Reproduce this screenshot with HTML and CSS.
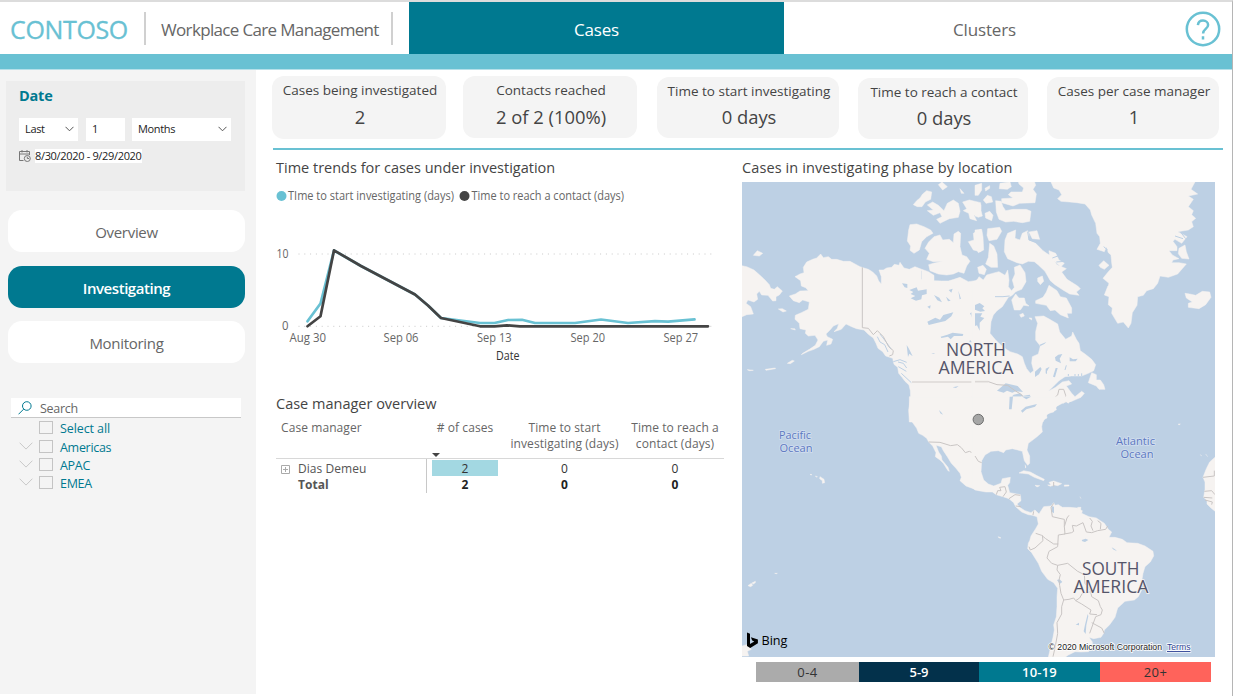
FILE: index.html
```html
<!DOCTYPE html>
<html lang="en">
<head>
<meta charset="utf-8">
<title>Workplace Care Management</title>
<link rel="stylesheet" href="styles.css">
</head>
<body>
<div class="app">
  <header class="header">
    <div class="brand">CONTOSO</div>
    <div class="divider"></div>
    <div class="product">Workplace Care Management</div>
    <div class="divider divider-end"></div>
    <div class="tab tab-active">Cases</div>
    <div class="tab tab-clusters">Clusters</div>
    <svg class="help" viewBox="0 0 36 36"><circle cx="18" cy="18" r="16.2"/><path d="M12.9 14.2C13.2 11.2 15.2 9.6 18 9.6c3 0 5.1 1.8 5.1 4.4 0 3.8-5 4.1-5 8.400M18 25.200v3.400"/></svg>
  </header>
  <div class="band"></div>
  <div class="body">
    <aside class="sidebar">
      <section class="date-panel">
        <h2 class="date-title">Date</h2>
        <div class="date-inputs">
          <div class="field field-last">Last<svg class="chev" viewBox="0 0 9 6"><path d="M.5 .8l4 4 4-4"/></svg></div>
          <div class="field field-num">1</div>
          <div class="field field-unit">Months<svg class="chev" viewBox="0 0 9 6"><path d="M.5 .8l4 4 4-4"/></svg></div>
        </div>
        <div class="date-range">
          <svg class="cal" viewBox="0 0 12 12"><path d="M4.5 10.5h-4v-9h10v3.5M.5 4h10M3 0v2.500M8 0v2.500"/><circle cx="8.300" cy="8.500" r="3"/><path d="M8.300 6.700v1.800h1.800"/></svg>
          <span class="range-text">8/30/2020 - 9/29/2020</span>
        </div>
      </section>
      <nav class="nav">
        <div class="nav-item">Overview</div>
        <div class="nav-item nav-active">Investigating</div>
        <div class="nav-item">Monitoring</div>
      </nav>
      <section class="slicer">
        <div class="search"><svg class="mag" viewBox="0 0 14 14"><circle cx="8.800" cy="5" r="4.300"/><path d="M5.700 8.100L.5 13.300"/></svg>Search</div>
        <div class="opt opt-all"><span class="arrow"></span><span class="box"></span>Select all</div>
        <div class="opt"><svg class="arrow" viewBox="0 0 14 8"><path d="M.6 .7l6.400 6.400L13.400 .7"/></svg><span class="box"></span>Americas</div>
        <div class="opt"><svg class="arrow" viewBox="0 0 14 8"><path d="M.6 .7l6.400 6.400L13.400 .7"/></svg><span class="box"></span>APAC</div>
        <div class="opt"><svg class="arrow" viewBox="0 0 14 8"><path d="M.6 .7l6.400 6.400L13.400 .7"/></svg><span class="box"></span>EMEA</div>
      </section>
    </aside>
    <main class="main">
      <div class="cards">
        <div class="card card-a"><div class="card-label">Cases being investigated</div><div class="card-value">2</div></div>
        <div class="card card-b"><div class="card-label">Contacts reached</div><div class="card-value">2 of 2 (100%)</div></div>
        <div class="card card-c"><div class="card-label">Time to start investigating</div><div class="card-value">0 days</div></div>
        <div class="card card-d"><div class="card-label">Time to reach a contact</div><div class="card-value">0 days</div></div>
        <div class="card card-e"><div class="card-label">Cases per case manager</div><div class="card-value">1</div></div>
      </div>
      <div class="rule"></div>
      <div class="columns">
        <div class="left">
          <h3 class="title">Time trends for cases under investigation</h3>
          <svg class="chart" viewBox="276 186 446 180">
            <circle cx="281.500" cy="196" r="5" fill="#69c1d3"/>
            <text x="288" y="200" textLength="166" lengthAdjust="spacingAndGlyphs">TIme to start investigating (days)</text>
            <circle cx="464.500" cy="196" r="5" fill="#444"/>
            <text x="471.500" y="200" textLength="152.500" lengthAdjust="spacingAndGlyphs">Time to reach a contact (days)</text>
            <path class="grid" d="M298.500 254H716M298.500 326.300H716"/>
            <text x="276.500" y="258" textLength="12" lengthAdjust="spacingAndGlyphs">10</text>
            <text x="282" y="330" textLength="6.500" lengthAdjust="spacingAndGlyphs">0</text>
            <polyline class="series" stroke="#69c1d3" points="307.500,321.300 320.500,303.500 334,250.500 361,266 415,294.500 428,305.500 441,318 480,323 494.500,323 508,320 522,319.800 535,323 575,323 601,319.500 628,323 655,321.200 668,321.700 694.500,319.300"/>
            <polyline class="series" stroke="#444" points="307.500,326.300 320.500,316.300 334,250.300 361,266 415,294.500 428,305.500 441,318 480,326.300 494.500,326.300 507,325.400 520,326.300 708,326.300"/>
            <text x="289.500" y="342" textLength="36.500" lengthAdjust="spacingAndGlyphs">Aug 30</text>
            <text x="383.500" y="342" textLength="35" lengthAdjust="spacingAndGlyphs">Sep 06</text>
            <text x="477" y="342" textLength="34.500" lengthAdjust="spacingAndGlyphs">Sep 13</text>
            <text x="570.500" y="342" textLength="34.500" lengthAdjust="spacingAndGlyphs">Sep 20</text>
            <text x="663.500" y="342" textLength="34.500" lengthAdjust="spacingAndGlyphs">Sep 27</text>
            <text class="axis-title" x="496" y="360" textLength="23.500" lengthAdjust="spacingAndGlyphs">Date</text>
          </svg>
          <h3 class="title title-table">Case manager overview</h3>
          <div class="table">
            <div class="row head">
              <div class="c1">Case manager</div>
              <div class="c2"># of cases<span class="sort"></span></div>
              <div class="c3">Time to start<br>investigating (days)</div>
              <div class="c4">Time to reach a<br>contact (days)</div>
            </div>
            <div class="row first">
              <div class="c1 name"><svg class="plus" viewBox="0 0 9 9"><path d="M.5 .5h8v8h-8zM2 4.500h5M4.500 2v5"/></svg>Dias Demeu</div>
              <div class="c2"><span class="hl">2</span></div>
              <div class="c3">0</div>
              <div class="c4">0</div>
            </div>
            <div class="row total">
              <div class="c1 name">Total</div>
              <div class="c2">2</div>
              <div class="c3">0</div>
              <div class="c4">0</div>
            </div>
          </div>
        </div>
        <div class="right">
          <h3 class="title title-map">Cases in investigating phase by location</h3>
          <svg class="map" viewBox="0 0 473 475">
            <rect width="473" height="475" fill="#bdd0e4"/>
            <!-- Alaska, western Canada, Siberia -->
            <g transform="translate(-2 -2) scale(.33333)">
              <path class="land" d="M0 256L20 260 42 270 60 286 75 300 88 314 92 325 103 328 112 320 127 333 118 345 108 350 108 362 98 363 84 346 65 345 58 334 50 342 53 358 42 366 24 360 18 370 32 380 40 402 20 404 0 413zM40 226L52 212 68 220 58 228z"/>
              <path class="land" d="M165 290L180 282 192 278 190 262 200 246 218 238 230 234 242 222 250 233 265 230 275 238 290 238 310 244 330 244 345 252 360 260 372 264 385 268 398 276 410 288 416 303 424 312 424 290 417 270 430 270 440 264 455 262 463 253 477 256 480 247 492 264 508 268 525 260 545 268 565 275 582 286 582 302 605 303 625 303 642 298 660 292 685 305 705 302 722 295 722 726 508 726 506 690 512 655 511 632 507 615 495 604 486 592 476 580 473 562 462 553 458 535 437 528 428 515 414 505 408 490 400 474 385 463 372 450 350 446 335 440 318 432 304 448 282 455 292 445 296 431 280 438 270 450 258 462 262 470 278 478 273 492 260 496 263 480 250 484 238 500 222 508 205 514 184 524 188 520 208 508 226 496 234 480 225 466 205 468 196 460 198 450 180 446 178 430 165 418 166 406 184 398 205 388 208 366 188 360 178 368 160 362 148 348 166 342 180 333 205 332 197 323 184 318 182 302z"/>
              <path class="land" d="M115 387l12-1 12 7-10 3zM152 446l12 0 2 4zM142 550l15-9 6 2-12 8zM76 568l30-4 0 2-28 5zM22 569l18 2-12 1z"/>
              <path class="land" d="M502 183L506 150 510 134 530 132 552 140 572 150 579 160 560 170 545 185 538 210 522 220 510 211 512 198zM520 74L530 62 540 54 548 42 560 32 575 36 572 58 556 66 546 80 532 80zM562 75L578 66 595 76 612 92 622 70 640 60 655 70 660 94 655 112 628 116 600 130 590 118 606 110 600 98 580 106 562 92 580 90zM595 14L606 6 622 20 608 30zM660 26l12 14-8 0zM668 66l20-6 34 8 0 30-20 8 8 16-20-6-4-16-16-8 10-6z"/>
              <path class="land" d="M555 205L566 186 582 170 600 165 608 180 628 178 640 188 642 162 655 154 662 160 660 200 666 225 680 230 690 244 680 258 672 280 655 275 640 282 620 285 595 282 570 272 566 254 580 250 608 244 580 245 560 238 568 220zM685 185L702 180 700 160 722 148V215L700 210z"/>
              <path class="water" d="M486 310l16 2 0 12-8-2zM508 330l22-8 4 10 26-4 0 14-14 4-2 12-16 4-16-7 14-7-14-6 8-6zM562 425l24-12 14 6 10-14 30-8-6 12-18 14-26 6-24 6zM582 345l16 8 8 14-14-6zM562 380l10-4-2 10zM626 330l12-4-4 12zM602 470l20-6 16-6 32 4-2 6-26 0-10 10-8-8-20 4zM574 519l12 0-6 2zM638 622l18-4-8 6zM598 690l8 8 4 12-10-10zM500 495l6 10 12 24-10-8-4 10zM700 365l20-6v8l-16 8zM690 400l18-10 14 5-8 10-18 8 22 2-12 18 14-2-22 10 2-20zM655 332l8 24-4 2zM618 350l14 12-8 2zM690 480l10 8-12-2zM545 272v26h1v-26z"/>
              <path class="coast" d="M412 470l8 16 14 8 10 22M420 462l20 26 14 20M460 545l20-6 20 8M475 560l24 14M484 580l30 28M474 546l16 4 10 14"/>
              <path class="border" d="M367 262V443L385 445 400 464 412 452 430 470 446 500 460 512 458 524 448 528"/>
              <path class="border border-strong" d="M516 606H722"/>
            </g>
            <!-- Arctic archipelago, eastern Canada, Greenland, Iceland -->
            <g transform="translate(233 -2) scale(.33333)">
              <path class="land" d="M0 312L12 290 25 300 35 285 60 278 72 275 90 286 98 270 102 300 100 320 110 332 118 322 112 300 120 282 118 262 135 255 150 278 153 305 140 328 122 335 112 346 100 352 82 380 66 392 55 405 48 425 45 460 60 478 72 490 85 502 105 515 128 522 142 530 148 550 155 566 166 580 176 572 170 550 172 530 190 522 196 498 182 480 182 455 188 430 180 410 206 408 224 418 248 432 254 456 272 478 290 468 293 456 304 478 312 490 316 512 330 522 350 538 362 554 356 572 340 580 320 588 290 588 270 590 252 602 240 614 220 634 242 622 262 606 282 602 290 612 274 618 290 640 300 650 320 634 328 640 318 652 290 664 270 666 258 672 242 680 244 690 228 695 214 706 204 726H-10V312z"/>
              <path class="land" d="M340 608L350 578 364 584 364 600 376 600 386 614 390 628 372 628 364 618zM276 660l20-6-4 8-16 6z"/>
              <path class="land" d="M228 6L236 24 252 30 260 44 248 56 258 64 284 66 306 68 330 72 346 90 350 105 362 130 366 160 374 170 376 190 366 208 388 215 394 200 400 218 408 225 410 248 412 262 400 275 384 295 402 310 396 325 388 345 402 350 400 374 412 384 410 400 428 430 445 426 460 444 468 430 472 398 486 376 488 350 505 346 515 332 535 326 548 310 555 288 580 292 608 282 634 252 612 248 590 248 594 240 612 236 592 225 582 212 606 212 606 200 594 184 600 178 620 190 636 170 608 155 640 150 655 140 650 125 662 115 650 104 655 92 640 80 655 58 640 48 668 42 648 28 660 6z"/>
              <path class="land" d="M612 205l18-10 4 20 8 22-22-2-10-14zM372 256l14-14 16 14-14 12-12-6zM630 340l14 2 18 4 20-12 22 2 4 16-16 22-20 12-32-4 0-12 12-4-18-12z"/>
              <path class="land" d="M0 16l20-6 0 20-10 16-10 0zM30 25l14-8 0 8-12 8zM75 10l30-4 4 14-12 8-24-2zM130 4h48l4 12-8 12 10 14-4 26-46 2-20 8-34-10 0-12 34-2-14-10 8-8 34 0 4-12-14-12zM25 60l12-14 12 4 4 16-20 4zM62 62l16 2 6 16 8 12 22-4 40 0 14 6-4 30-22 4-26-4-24 2-20-8-8-22zM30 100l14-6 10 12-4 16-18-8zM0 68l18 6 0 18 4 16-12 4-10-4zM38 146l36-4 6 12-14 24-24 4-6-16zM0 150l20-2 4 22 2 40-16 8-10-20zM44 190l12 8 10 24 2 40-20 0-16-10 8-20zM8 262l16-6 10 12-6 16-16-4z"/>
              <path class="land" d="M90 180L98 160 122 150 120 175 135 180 142 160 158 152 162 166 160 180 182 190 204 212 224 226 246 254 274 266 260 276 276 298 308 318 316 326 304 336 312 346 284 342 264 330 240 314 226 302 210 274 190 255 178 245 160 244 142 252 126 248 98 236 88 215zM162 156l24-4 8 26-22-2zM222 212l20 8 10 20 16 10-10 10-20-16-14-10zM188 294l14-6 4 16-10 10-8-10zM110 360l12-18 10 12 16 0 4 16 10 8-16-2-10 14-18 0zM134 404l10-4 4 8-10 4zM162 414l8 0 0 6zM182 362l22-10 10-16 8-20 24 16 10 18 18 4 16 30 0 16-14 0 4 14-24-10-16-14-14 2-12-16-32-6z"/>
              <path class="water" d="M66 632l26-22 36 8 16 18-22-2-10 4-16-6-10 6zM102 692l0-34 14-14 18-4 10 8-18 8-4 18-4 18zM142 648l22-4 6 12-12 18-18-14zM140 690l20-10 18 0-20 10-18 4zM176 664l28-4-12 6-16 4zM240 532l10-8 12-2-8 14 4 14-16-8zM284 532l10 6 14-2-6 8-18 0zM212 580l0-14 12-6-8 14 0 8zM234 590l8-26 6 0-8 28zM180 575l16-14 4 6-8 16-12 8zM194 494l20-8-6 6-12 6zM0 375l14-6 14 10-6 6 8 8-14 2-16-6zM0 400l22 0-6 10 12 4-14 14 0 24-8-16-6 2z"/>
              <path class="coast" d="M232 234l22-8M244 246l26-2M385 320l15-5M618 158l14 18M600 168l24 8M270 570l4-14M280 588v-6M300 588v-6M310 588v-6M320 588v-8M158 155l4 25 24 8M386 200l12 10M62 430l-12 16M60 350l24 0 20-2"/>
              <path class="border border-strong" d="M0 605H40"/>
              <path class="border" d="M40 605L66 614 98 616 120 632 140 644 148 660 150 690M138 690L168 682 174 670 206 656 236 655 248 645 252 628 266 628 272 646 270 668"/>
            </g>
            <!-- Pacific side of the United States and Mexico -->
            <g transform="translate(-2 218) scale(.33333)">
              <path class="land" d="M508 -10L508 20 508 38 516 65 530 85 536 100 548 106 560 115 566 126 578 138 588 158 586 170 600 180 610 190 624 212 628 214 624 202 606 180 604 168 596 156 588 136 604 140 610 152 622 170 634 190 648 205 660 220 664 232 660 242 678 258 694 264 722 272V-10z"/>
              <path class="land" d="M240 230l12 8 2 10-7 2 0-8-8-6zM226 228l6 2-2 2zM210 223l6 1-3 1zM24 557l10-7 4 6-6 4zM36 549l10-5 0 4-6 4zM104 520l8 0-2 1zM0 740L20 734 34 748 22 754 26 768H0z"/>
              <path class="water" d="M597 30l8 8 4 6-8-4z"/>
              <path class="border" d="M566 126L600 127 632 137 652 134 664 143 676 158 688 154 700 160 722 190"/>
            </g>
            <!-- Eastern United States, Central and South America, West Africa -->
            <g transform="translate(233 218) scale(.33333)">
              <path class="land" d="M-10 -10H270L256 10 244 20 236 36 214 42 216 54 204 60 200 80 202 96 186 110 176 118 160 130 156 150 164 168 164 190 158 196 148 182 142 154 128 150 112 146 92 150 86 158 70 152 48 154 30 165 20 182 18 215 26 240 40 252 56 258 78 250 82 236 106 232 104 248 98 256 104 278 136 284 138 302 126 312 134 322 150 332 168 338 180 330 192 342 206 320 228 318 236 308 240 316 250 314 262 322 284 322 306 324 322 332 320 340 342 350 364 354 376 362 388 370 400 388 410 396 402 412 420 412 442 418 456 428 488 430 510 438 534 454 536 468 526 486 510 500 504 520 500 545 500 570 490 590 478 600 450 604 428 624 420 652 404 674 388 690 386 700 378 712 356 716 342 712 352 726 352 745 340 755 318 756 300 755 280 765 270 772H220L226 745 234 712 238 690 236 675 244 650 246 620 246 590 248 565 236 548 218 538 200 514 190 490 170 458 158 446 160 430 164 422 168 408 182 386 190 372 186 350 172 346 160 344 140 336 122 320 116 308 102 296 84 290 64 284 52 276 32 276 0 270-10 262z"/>
              <path class="land" d="M132 219L146 212 166 216 184 226 208 238 206 242 178 232 160 222 142 220zM222 247l14-4 24 8-12 6-10-2-12 4-8-4 10 0zM268 255l14 0 0 3-14 1zM180 256l14 1-8 4zM150 194l3 8-3 2M308 322l10 0-2 8-8 0zM315 290l3 6M610 72l6 0-4 3zM675 164l6 4M692 162l6 8M70 410l8 4-6 0zM268-10h24l-4 10-8 10-4-6-12 6z"/>
              <path class="land" d="M722 170L704 186 694 206 684 232 690 246 690 268 686 292 696 302 696 312 708 324 722 335z"/>
              <path class="water" d="M102 28l2-38h10l-4 38zM138 32l14-12 34-8-6 8-26 8-12 10zM142-10h26l-14 8zM320 420l12-4 8 4-10 6-8-2zM410 442l10 6 6 6-12-6zM229 318l8 2 0 20-6-4zM246 540l8-2 8 8-8 6zM302 674l10-6 0 8zM326 694l4-20 8-32 2 6-6 28-2 26z"/>
              <path class="border" d="M0 168L10 184 20 188M64 284L68 272 78 272 74 262 90 260 94 276 84 290M102 296L120 284 136 286M122 318L138 320M174 345L176 334M236 310L228 322 232 350 258 356 268 358 268 380 270 402 250 405 248 440 222 454 216 474 230 490 248 496 278 490 288 498 308 514 328 524 330 550 346 570 350 590 370 602 376 620 382 630 378 644 362 650 344 700M248 496L246 510 256 524 252 540 254 556 258 580 266 600 260 620 260 642 246 668 248 700 240 744 234 770M266 600L282 598 296 594 302 602 314 594 322 580 344 576M302 602L320 612 348 630 344 642 366 644M350 668L380 684 388 700M182 400L200 406 212 416 236 432 250 432M162 440L166 450 180 444 204 422 202 406M268 402L290 398 296 394 292 376 304 378 324 368 334 396 350 398 368 392 392 388 398 378M344 354L352 364 348 378 354 392M368 362L378 370 376 388M268 380L276 354 282 346M236 246v14M684 232L718 228V212M688 274L710 272 720 284M686 292L712 294M690 300L712 306 710 314"/>
            </g>
            <circle cx="236.300" cy="237.500" r="5.200" fill="#a6a6a6" stroke="#6f6f6f"/>
            <text class="continent"><tspan x="204" y="174" textLength="60" lengthAdjust="spacingAndGlyphs">NORTH</tspan><tspan x="196.500" y="192" textLength="75" lengthAdjust="spacingAndGlyphs">AMERICA</tspan></text>
            <text class="continent"><tspan x="340" y="393" textLength="57.500" lengthAdjust="spacingAndGlyphs">SOUTH</tspan><tspan x="331.500" y="411" textLength="75" lengthAdjust="spacingAndGlyphs">AMERICA</tspan></text>
            <g class="ocean">
              <text x="37" y="257" textLength="32" lengthAdjust="spacingAndGlyphs">Pacific</text>
              <text x="37.500" y="269.500" textLength="33" lengthAdjust="spacingAndGlyphs">Ocean</text>
              <text x="374" y="263" textLength="39" lengthAdjust="spacingAndGlyphs">Atlantic</text>
              <text x="378.500" y="275.500" textLength="33" lengthAdjust="spacingAndGlyphs">Ocean</text>
            </g>
            <path d="M5 450.500l3 1.200v10.200l4.300-2.500-2.100-1-1.300-3.200 7 2.400v3.700l-7.700 4.600L5 464z"/>
            <text class="bing" x="19.500" y="463" textLength="26" lengthAdjust="spacingAndGlyphs">Bing</text>
            <text class="copy" x="306.500" y="468" textLength="113.500" lengthAdjust="spacingAndGlyphs">© 2020 Microsoft Corporation</text>
            <text class="copy terms" x="425" y="468" textLength="23.500" lengthAdjust="spacingAndGlyphs">Terms</text>
          </svg>
          <div class="scale">
            <div class="s1">0-4</div><div class="s2">5-9</div><div class="s3">10-19</div><div class="s4">20+</div>
          </div>
        </div>
      </div>
    </main>
  </div>
</div>
</body>
</html>
```
FILE: styles.css
```css
* { box-sizing: border-box; }
body { margin: 0; background: #fff; font-family: "Open Sans", "Noto Sans", sans-serif; color: #444; }
h2, h3 { margin: 0; font-weight: 400; }
.app { width: 1233px; height: 696px; border-top: 2px solid #dcdcdc; border-right: 1px solid #b5b5b5; white-space: nowrap; overflow: hidden; }

.header { display: flex; height: 52px; align-items: center; }
.brand { width: 134px; padding: 2px 0 0 10px; color: #69c1d3; font-size: 25px; line-height: 34px; letter-spacing: -0.35px; -webkit-text-stroke: 0.3px #69c1d3; }
.divider { width: 2px; height: 33px; margin-left: 10px; background: #d0d0d0; }
.product { width: 231px; padding: 3px 0 0 15px; font-size: 17px; letter-spacing: -0.66px; color: #666; }
.divider-end { margin: 0 16px 0 14px; }
.tab { display: flex; align-items: center; justify-content: center; height: 52px; padding-top: 3px; font-size: 17px; letter-spacing: -0.15px; }
.tab-active { width: 375px; background: #007990; color: #fff; }
.tab-clusters { width: 401px; color: #666; }
.help { width: 36px; height: 36px; margin-top: 1px; fill: none; stroke: #69c1d3; stroke-width: 2.5; }
.band { height: 16px; background: #69c1d3; border-bottom: 1px solid #b6e0e9; }
.body { display: flex; height: 624px; }

.sidebar { width: 256px; background: #f4f4f4; padding: 11px 11px 0 6px; }
.date-panel { height: 110px; background: #ededed; padding: 4px 13px 0; }
.date-title { height: 22px; line-height: 22px; font-size: 14.5px; font-weight: 700; color: #007990; letter-spacing: -0.2px; }
.date-inputs { display: flex; margin-top: 11px; }
.field { display: flex; align-items: center; justify-content: space-between; height: 23px; background: #fff; font-size: 11px; letter-spacing: -0.35px; padding: 0 4px 2px 6px; color: #222; }
.field-last { width: 59px; }
.field-num { width: 39px; margin: 0 7px 0 8px; }
.field-unit { width: 99px; }
.chev { width: 9px; height: 6px; fill: none; stroke: #555; }
.date-range { display: flex; align-items: center; margin-top: 8px; height: 14px; }
.cal { width: 12px; height: 12px; fill: none; stroke: #777; margin-right: 4px; }
.range-text { width: 107px; height: 14px; line-height: 14px; background: #fff; font-size: 11px; letter-spacing: -0.33px; color: #222; }

.nav { display: grid; gap: 13.5px; margin: 19px 0 0 2px; }
.nav-item { display: flex; align-items: center; justify-content: center; height: 42px; padding-top: 2px; border-radius: 14px; background: #fff; color: #666; font-size: 15px; letter-spacing: -0.3px; }
.nav-active { background: #007990; color: #fff; font-weight: 600; letter-spacing: -0.45px; }
.slicer { margin: 35px 4px 0 5px; color: #007990; font-size: 12.5px; }
.search { display: flex; align-items: center; height: 20px; background: #fff; border-bottom: 1px solid #c8c8c8; padding: 2px 0 0 7px; color: #666; letter-spacing: -0.3px; }
.mag { width: 14px; height: 14px; margin: -2px 8px 0 0; fill: none; stroke: #007990; }
.opt { display: flex; align-items: center; height: 18px; padding-left: 7.5px; letter-spacing: -0.3px; }
.opt-all { height: 20px; letter-spacing: -0.1px; }
.arrow { width: 14px; height: 8px; margin: -3px 6px 0 0; fill: none; stroke: #c8c8c8; }
.box { width: 14px; height: 13px; margin: -1px 7.5px 0 0; border: 1px solid #c4c4c4; }

.main { width: 976px; padding: 6px 0 0 16px; }
.cards { display: flex; align-items: flex-start; height: 72px; }
.card { height: 62px; border-radius: 12px; background: #f4f4f4; text-align: center; padding: 4px 0 0 2px; }
.card-label { font-size: 13.5px; line-height: 20px; height: 24px; }
.card-value { font-size: 18.400px; line-height: 26px; height: 30px; }
.card-a { width: 174px; height: 63px; margin-right: 17px; }
.card-b { width: 174px; margin-right: 20px; }
.card-c { width: 182px; height: 61px; margin: 1px 19px 0 0; }
.card-d { width: 170px; height: 61px; margin: 2px 19px 0 0; }
.card-c .card-value, .card-d .card-value, .card-e .card-value { line-height: 24px; }
.card-e { width: 172px; margin-top: 1px; }
.rule { width: 950px; height: 2px; margin-left: 1px; background: #69c1d3; }
.columns { display: flex; }
.left { width: 470px; padding-left: 4px; }
.title { height: 36px; line-height: 36px; font-size: 14.5px; color: #444; }
.chart { display: block; width: 446px; height: 180px; font-size: 12px; }
.chart text { fill: #666; }
.chart .axis-title { fill: #333; }
.grid { fill: none; stroke: #c8c8c8; stroke-width: 1; stroke-dasharray: 1 4.800; }
.series { fill: none; stroke-width: 2.700; stroke-linejoin: round; stroke-linecap: round; }
.title-table { height: 32px; line-height: 32px; margin-top: 22px; }
.table { width: 448px; font-size: 12px; color: #555; }
.row { display: grid; grid-template-columns: 151px 76px 123px 98px; height: 16px; line-height: 16px; text-align: center; color: #333; }
.first { height: 18px; line-height: 19px; }
.head { height: 39px; border-bottom: 1px solid #d8d8d8; color: #666; letter-spacing: 0.08px; }
.c1 { text-align: left; padding-left: 5px; border-right: 1px solid #c8c8c8; color: #555; }
.head .c1 { border: 0; color: #666; }
.head .c2 { position: relative; }
.sort { position: absolute; left: 5px; bottom: 1px; border: 4px solid transparent; border-top-color: #444; border-bottom: 0; }
.name { padding-left: 22px; letter-spacing: 0.05px; }
.plus { width: 9px; height: 9px; margin: 0 8px 0 -17px; fill: none; stroke: #aaa; vertical-align: -1px; }
.hl { display: block; width: 66px; height: 16px; margin: 1px 0 0 5px; line-height: 17px; background: #a3d8e2; }
.total { font-weight: 700; color: #222; }

.right { width: 490px; }
.title-map { height: 32px; line-height: 36px; letter-spacing: 0.1px; }
.map { display: block; width: 473px; height: 475px; }
.land { fill: #f6f3f1; stroke: #f6f3f1; stroke-width: 1.5; }
.water { fill: #bdd0e4; }
.coast { fill: none; stroke: #bdd0e4; stroke-width: 3; }
.border { fill: none; stroke: #c9c5c4; stroke-width: 3; stroke-linejoin: round; }
.border-strong { stroke: #dcd8d6; stroke-width: 5; }
.continent { font-size: 18px; fill: #55556a; stroke: #f6f3f1; stroke-width: 1.500; paint-order: stroke; }
.ocean { font-size: 10.500px; fill: #5c78c0; stroke: #d3dff0; stroke-width: 1.500; paint-order: stroke; }
.bing { font-size: 13px; }
.copy { font-family: "Liberation Sans", sans-serif; font-size: 9px; fill: #222; stroke: #fff; stroke-width: 1.500; paint-order: stroke; }
.terms { fill: #2b3f93; text-decoration: underline; }
.scale { display: grid; grid-template-columns: 103px 120px 121px 111px; width: 455px; height: 19px; margin: 5px 0 0 14px; text-align: center; font-size: 13px; line-height: 20px; }
.s1 { background: #ababab; color: #333; letter-spacing: 0.5px; }
.s2 { background: #03314b; color: #fff; font-weight: 600; }
.s3 { background: #007990; color: #fff; font-weight: 600; letter-spacing: 0.2px; }
.s4 { background: #ff635b; color: #333; letter-spacing: 0.4px; }
```
